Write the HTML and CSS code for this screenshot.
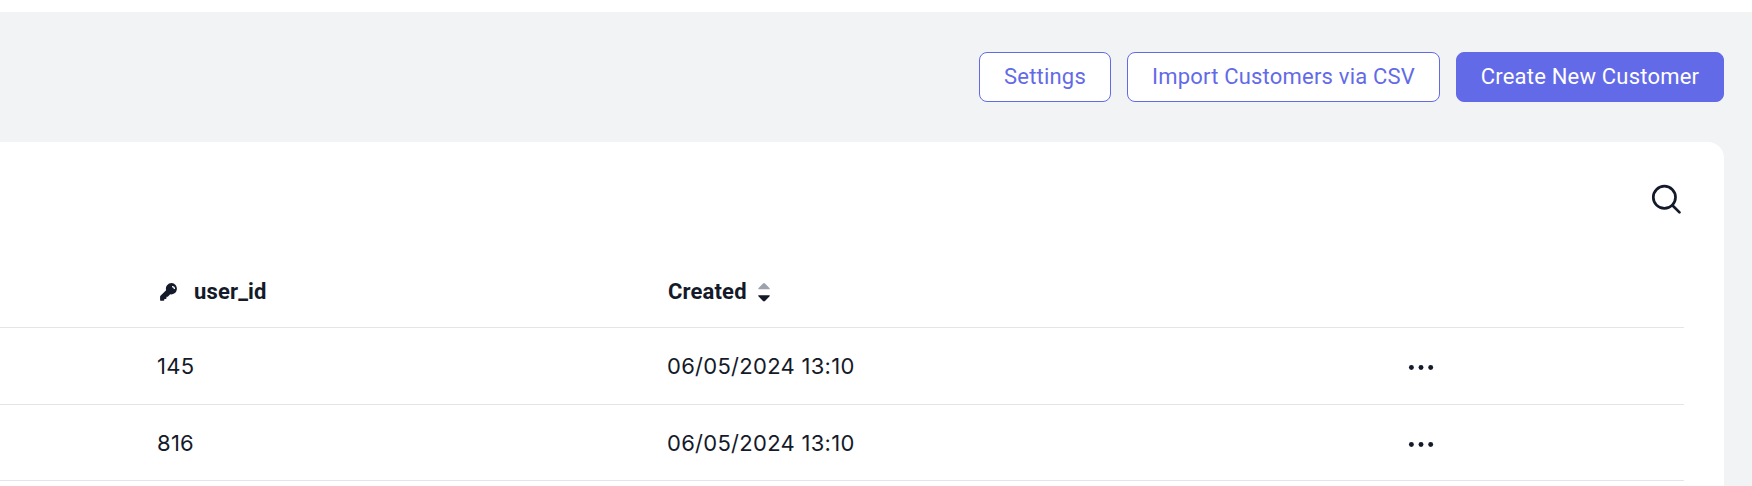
FILE: index.html
```html
<!DOCTYPE html>
<html lang="en">
<head>
<meta charset="utf-8">
<title>Customers</title>
<link rel="stylesheet" href="styles.css">
</head>
<body>
<header class="toolbar">
  <button class="btn btn-settings">Settings</button>
  <button class="btn btn-import">Import Customers via CSV</button>
  <button class="btn btn-primary">Create New Customer</button>
</header>
<main class="card">
  <div class="search">
    <svg width="32" height="32" viewBox="0 0 32 32" fill="none" stroke="currentColor" stroke-width="2.7" stroke-linecap="round"><circle cx="14.4" cy="14.3" r="11.100"/><path d="M22.3 22.2 29.5 29.4"/></svg>
  </div>
  <div class="row head">
    <div class="key-head">
      <svg class="key" width="18" height="18" viewBox="0 0 18 18"><path fill="currentColor" fill-rule="evenodd" d="M11.600 0a5.700 5.700 0 0 0-5.500 7.200L.5 12.800a1.400 1.400 0 0 0-.4 1V16.900q0 .9.900.9h2.500q.8 0 .8-.8v-1.100h1.300q.9 0 .9-.9v-1.300h1.300l2.400-2.400a5.700 5.700 0 1 0 1.400-11.300ZM12 2.900a3.100 3.100 0 0 1 3.100 3.100h-1.300A1.800 1.800 0 0 0 12 4.200Z"/></svg>
      <span>user_id</span>
    </div>
    <div class="created-head">
      <span>Created</span>
      <svg width="12" height="20" viewBox="0 0 12 20"><path class="sort-up" d="M.5 7.300Q-.1 6.600.6 5.900L5 1.500q1-.9 2 0l4.400 4.400q.7.700.1 1.400Z"/><path fill="currentColor" d="M.5 13.200Q-.1 13.900.6 14.600L5 19q1 .9 2 0l4.400-4.400q.7-.7.1-1.400Z"/></svg>
    </div>
    <div></div>
  </div>
  <div class="row">
    <div>145</div>
    <div>06/05/2024 13:10</div>
    <div class="more"><svg width="28" height="8" viewBox="0 0 28 8" fill="currentColor"><circle cx="4.400" cy="4.500" r="2.450"/><circle cx="14" cy="4.500" r="2.450"/><circle cx="23.700" cy="4.500" r="2.450"/></svg></div>
  </div>
  <div class="row last">
    <div>816</div>
    <div>06/05/2024 13:10</div>
    <div class="more"><svg width="28" height="8" viewBox="0 0 28 8" fill="currentColor"><circle cx="4.400" cy="4.500" r="2.450"/><circle cx="14" cy="4.500" r="2.450"/><circle cx="23.700" cy="4.500" r="2.450"/></svg></div>
  </div>
</main>
</body>
</html>
```
FILE: styles.css
```css
* { box-sizing: border-box; }
body {
  margin: 0;
  height: 486px;
  overflow: hidden;
  display: flex;
  flex-direction: column;
  background: #f2f3f5;
  color: #141a2a;
  font: 22px/28px Inter, sans-serif;
  letter-spacing: .28px;
}
svg { display: block; flex: none; }
.toolbar {
  flex: none;
  height: 142px;
  border-top: 12px solid #fff;
  padding: 40px 28px;
  display: flex;
  justify-content: flex-end;
  gap: 16px;
}
.btn {
  height: 50px;
  padding: 0;
  border: 1px solid #636ae8;
  border-radius: 8px;
  background: #fff;
  color: #636ae8;
  font: 22px/28px Roboto, sans-serif;
  letter-spacing: .2px;
  white-space: nowrap;
}
.btn-settings { width: 132px; }
.btn-import { width: 313px; }
.btn-primary { width: 268px; background: #636ae8; color: #fff; }
.card {
  flex: 1;
  margin-right: 28px;
  padding-right: 40px;
  background: #fff;
  border-radius: 0 16px 0 0;
}
.search {
  height: 114px;
  padding-top: 41px;
  display: flex;
  justify-content: flex-end;
}
.search svg { margin-right: 2px; }
.row {
  height: 77px;
  padding-left: 157px;
  display: grid;
  grid-template-columns: 510px 740px 1fr;
  align-items: center;
  border-bottom: 1px solid #e4e5e9;
}
.last { height: 76px; }
.head {
  height: 72px;
  font: 700 22px/28px Roboto, sans-serif;
  letter-spacing: .15px;
}
.key-head, .created-head { display: flex; align-items: center; }
.key-head { padding-left: 3px; gap: 16px; }
.created-head { padding-left: 1px; gap: 11px; }
.sort-up { fill: #9ca3af; }
.more { padding-top: 2px; }
```
